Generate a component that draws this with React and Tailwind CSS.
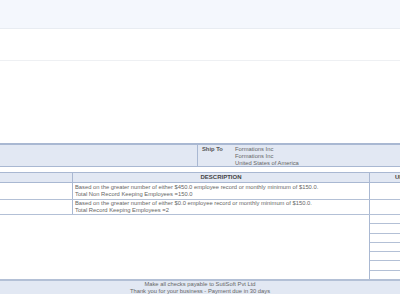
export default function App() {
  const lines = [0, 1, 2, 3, 4, 5, 6];
  return (
    <div className="w-[400px] h-[300px] overflow-hidden bg-white font-['Liberation_Sans',Arial,sans-serif] text-[5.8px] leading-[7px] text-[#666]">
      <div className="h-[29px] bg-[#f4f7fd] border-b border-[#e8ecf2]" />
      <div className="h-[32px] border-b border-[#eef0f3]" />
      <div className="h-[82px]" />

      {/* ship to */}
      <div className="flex h-[24px] w-[466px] border-t-2 border-b border-[#a9b8d2] bg-[#e2e8f3]">
        <div className="w-[198px] border-r border-[#a9b8d2]" />
        <div className="flex pl-[4px] pt-[1px]">
          <div className="w-[33px] font-bold text-[#555]">Ship To</div>
          <div className="flex flex-col">
            <span>Formations Inc</span>
            <span>Formations Inc</span>
            <span>United States of America</span>
          </div>
        </div>
      </div>

      <div className="h-[5px]" />

      {/* line items */}
      <div className="w-[454px]">
        <div className="flex h-[11px] border-y border-[#a9b8d2] bg-[#e2e8f3] font-bold text-[6px] text-[#444]">
          <div className="w-[73px] border-r border-[#a9b8d2]" />
          <div className="w-[297px] border-r border-[#a9b8d2] text-center leading-[9px]">DESCRIPTION</div>
          <div className="flex-1 text-center leading-[9px]">UNIT PRICE</div>
        </div>
        <div className="flex h-[17px] border-b border-[#b3c0d6]">
          <div className="w-[73px] border-r border-[#a9b8d2]" />
          <div className="w-[297px] border-r border-[#a9b8d2] pl-[2px] pt-[1px]">
            <div>Based on the greater number of either $450.0 employee record or monthly minimum of $150.0.</div>
            <div>Total Non Record Keeping Employees =150.0</div>
          </div>
          <div className="flex-1" />
        </div>
        <div className="flex h-[15px] border-b border-[#b3c0d6]">
          <div className="w-[73px] border-r border-[#a9b8d2]" />
          <div className="w-[297px] border-r border-[#a9b8d2] pl-[2px]">
            <div>Based on the greater number of either $0.0 employee record or monthly minimum of $150.0.</div>
            <div>Total Record Keeping Employees =2</div>
          </div>
          <div className="flex-1" />
        </div>
        <div className="flex h-[64px]">
          <div className="w-[370px] border-r border-[#a9b8d2]" />
          <div className="flex flex-1 flex-col">
            {lines.map((i) => (
              <div key={i} className={i < 6 ? "flex-1 border-b border-[#b3c0d6]" : "flex-1"} />
            ))}
          </div>
        </div>
      </div>

      {/* footer */}
      <div className="h-[15px] border-t-2 border-[#b3c0d6] bg-[#e2e8f3] text-center">
        <div>Make all checks payable to SutiSoft Pvt Ltd</div>
        <div>Thank you for your business - Payment due in 30 days</div>
      </div>
    </div>
  );
}
